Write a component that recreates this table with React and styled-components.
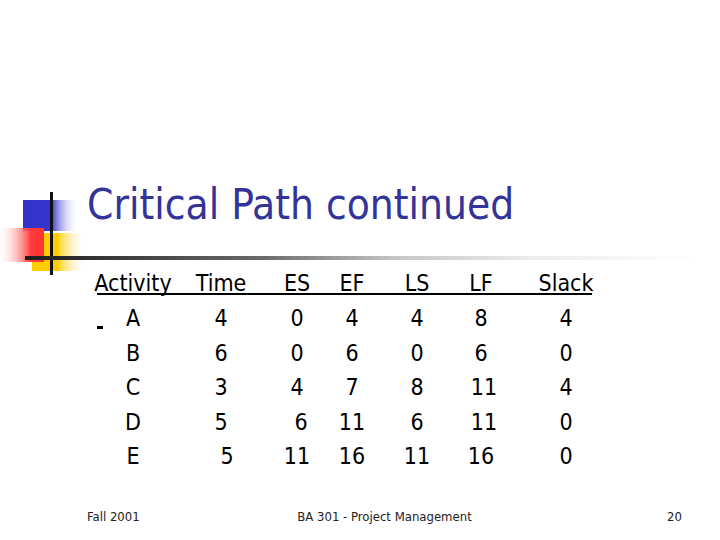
import styled, { createGlobalStyle } from 'styled-components'

const Global = createGlobalStyle`
    html, body {
        margin: 0;
        padding: 0;
        background: #fff;
    }
    body {
        font-family: "DejaVu Sans Condensed", "DejaVu Sans", sans-serif;
        font-stretch: condensed;
    }
`

const Slide = styled.div`
    width: 720px;
    height: 540px;
    display: flex;
    flex-direction: column;
    background: #fff;
    overflow: hidden;
    padding-top: 180px;
    box-sizing: border-box;
`

const TitleArea = styled.div`
    position: relative;
`

const Decor = styled.svg`
    position: absolute;
    left: 0;
    top: 0;
`

const Title = styled.h1`
    margin: 0;
    padding-left: 87px;
    font-size: 42px;
    line-height: 50px;
    font-weight: normal;
    color: #333399;
    position: relative;
`

const Rule = styled.div`
    margin: 26px 20px 0 25px;
    height: 4px;
    background: linear-gradient(to right, #1c1c1c 0%, #6a6a6a 35%, #c6c6c6 55%, #ececec 75%, #ffffff 100%);
    position: relative;
`

const Table = styled.div`
    margin-left: 87px;
    font-size: 23px;
    color: #000;
`

const HeaderLine = styled.div`
    margin: 13px 0 0 10px;
    width: 495px;
    border-bottom: 2px solid #000;
`

const Row = styled.div`
    display: grid;
    grid-template-columns: 92px 84px 68px 42px 88px 40px 130px;
    line-height: ${p => p.$head ? '20px' : '34.5px'};
    margin-left: ${p => p.$head ? '-10px' : '0'};
`

const Body = styled.div`
    margin-top: 6px;
`

const Cell = styled.div`
    text-align: center;
    white-space: nowrap;
    position: relative;
    padding-left: ${p => (p.$dx || 0) * 2}px;
`

const Bullet = styled.span`
    position: absolute;
    left: 10px;
    top: 25px;
    width: 6px;
    height: 3px;
    background: #000;
`

const Footer = styled.div`
    margin-top: auto;
    padding: 0 38px 15px 87px;
    display: grid;
    grid-template-columns: 1fr auto 1fr;
    font-size: 13px;
    line-height: 16px;
    color: #222;
`

const FootRight = styled.div`
    text-align: right;
`

const heads = ['Activity', 'Time', 'ES', 'EF', 'LS', 'LF', 'Slack']

const rows = [
    ['A', '4', '0', '4', '4', '8', '4'],
    ['B', '6', '0', '6', '0', '6', '0'],
    ['C', '3', '4', '7', '8', '11', '4'],
    ['D', '5', '6', '11', '6', '11', '0'],
    ['E', '5', '11', '16', '11', '16', '0'],
]

const shifts = {
    '0-0': -3, '3-2': 4, '4-1': 6, '2-5': 3, '3-5': 3,
}

const App = () => {
    return (
        <Slide>
            <Global />
            <TitleArea>
                <Decor width="90" height="100" viewBox="0 180 90 100">
                    <defs>
                        <linearGradient id="blue" x1="0" x2="1" y1="0" y2="0">
                            <stop offset="0" stopColor="#3333cc" />
                            <stop offset="0.5" stopColor="#3636cc" />
                            <stop offset="1" stopColor="#ffffff" stopOpacity="0" />
                        </linearGradient>
                        <linearGradient id="yellow" x1="0" x2="1" y1="0" y2="0">
                            <stop offset="0" stopColor="#ffcc00" />
                            <stop offset="0.45" stopColor="#ffcc00" />
                            <stop offset="1" stopColor="#ffffff" stopOpacity="0" />
                        </linearGradient>
                        <linearGradient id="red" x1="1" x2="0" y1="0" y2="0">
                            <stop offset="0" stopColor="#ff3333" />
                            <stop offset="0.3" stopColor="#ff3a3a" />
                            <stop offset="1" stopColor="#ffffff" stopOpacity="0.2" />
                        </linearGradient>
                    </defs>
                    <rect x="23" y="200" width="56" height="31" fill="url(#blue)" />
                    <rect x="32" y="233" width="54" height="38" fill="url(#yellow)" />
                    <rect x="0" y="228" width="44" height="34" fill="url(#red)" />
                    <rect x="50" y="192" width="3" height="83" fill="#111" />
                </Decor>
                <Title>Critical Path continued</Title>
                <Rule />
            </TitleArea>
            <Table>
                <HeaderLine>
                    <Row $head>
                        {heads.map(h => <Cell key={h}>{h}</Cell>)}
                    </Row>
                </HeaderLine>
                <Body>
                    {rows.map((r, i) => (
                        <Row key={r[0]}>
                            {r.map((v, j) => (
                                <Cell key={j} $dx={shifts[`${i}-${j}`]}>
                                    {i === 0 && j === 0 && <Bullet />}
                                    {v}
                                </Cell>
                            ))}
                        </Row>
                    ))}
                </Body>
            </Table>
            <Footer>
                <div>Fall 2001</div>
                <div>BA 301 - Project Management</div>
                <FootRight>20</FootRight>
            </Footer>
        </Slide>
    )
}

export default App
